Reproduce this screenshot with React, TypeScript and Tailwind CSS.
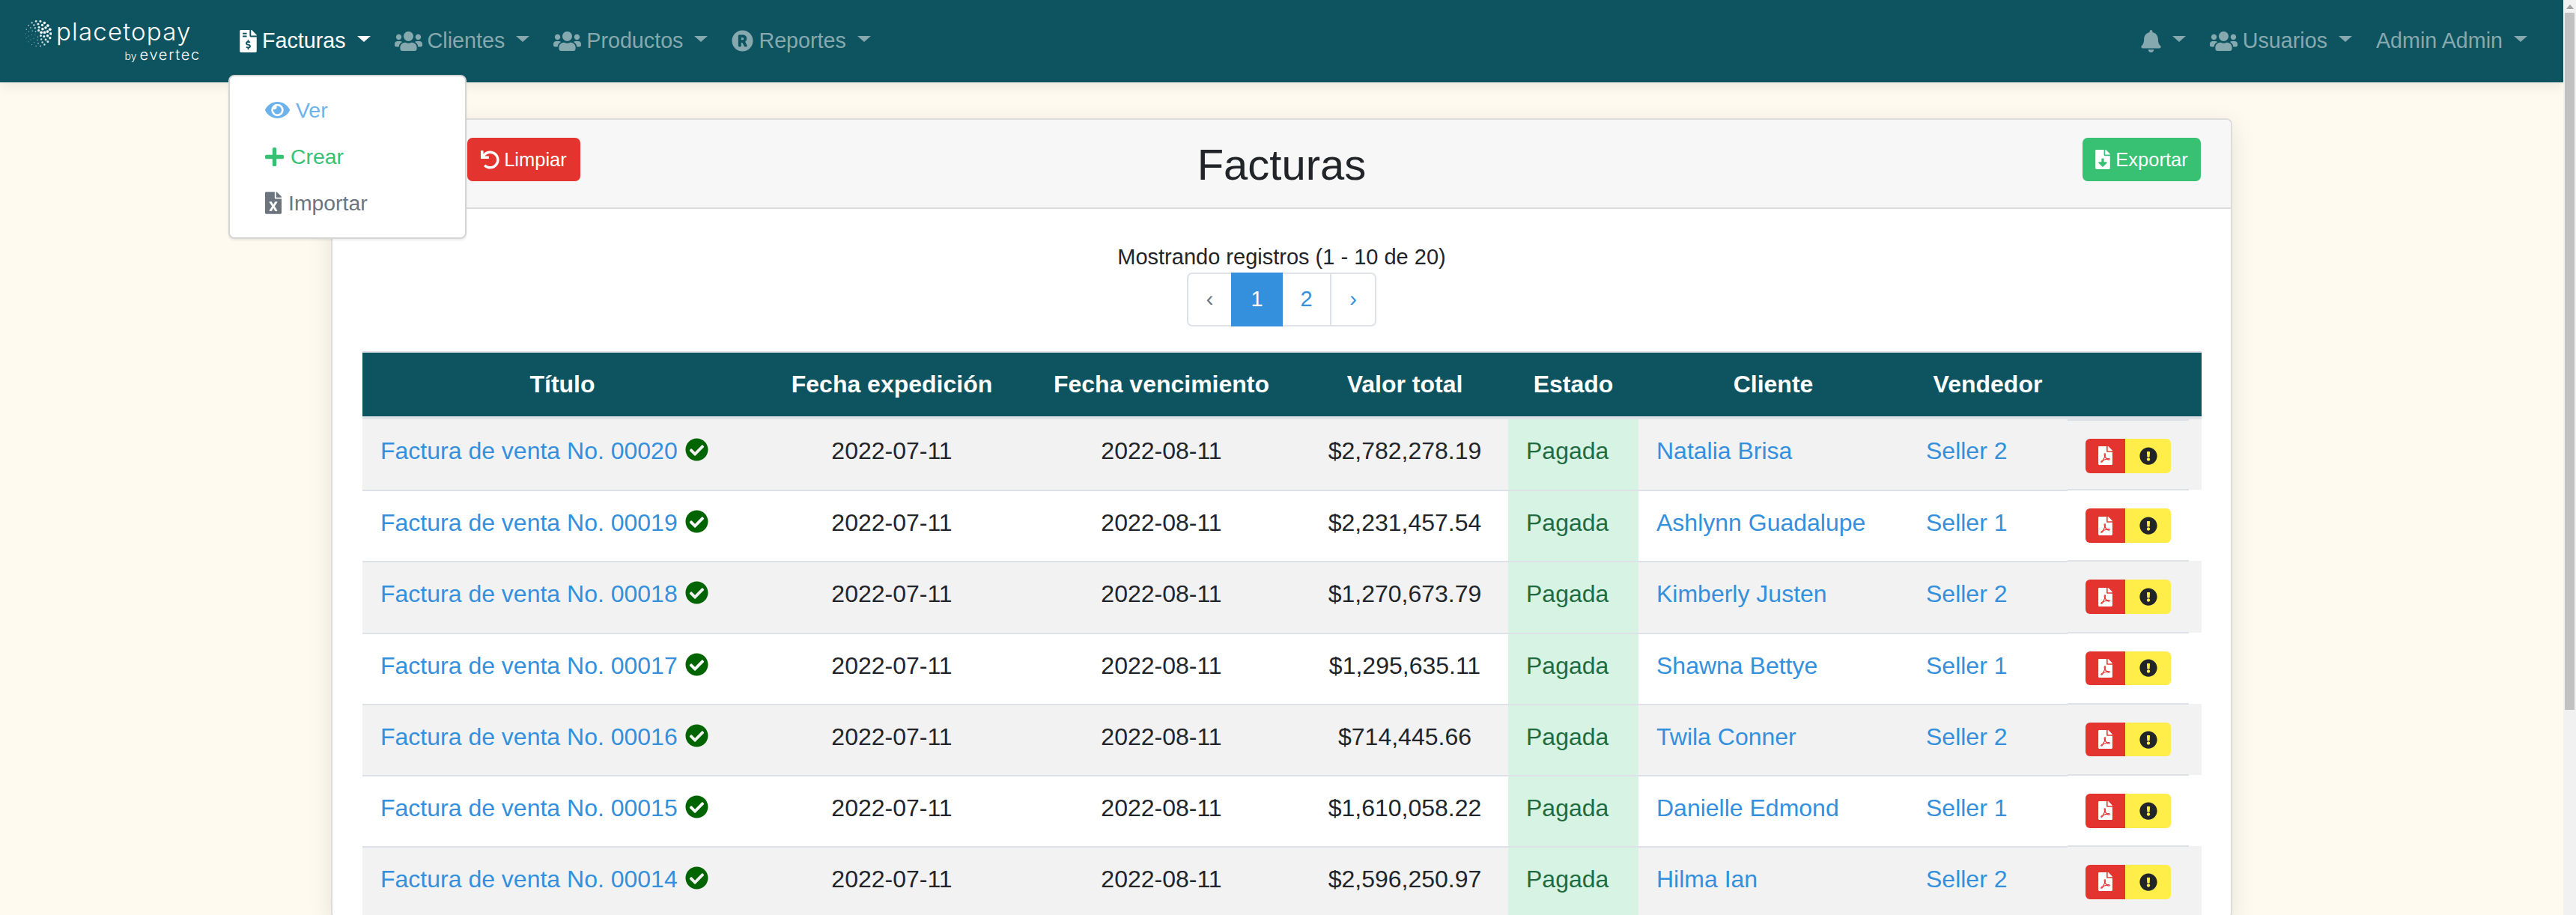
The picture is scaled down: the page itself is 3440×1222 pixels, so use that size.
import React from "react";
import {
  FaFileInvoiceDollar, FaUsers, FaRegistered, FaBell, FaEye, FaPlus, FaFileExcel,
  FaUndo, FaFileDownload, FaCheckCircle, FaFilePdf, FaExclamationCircle,
} from "react-icons/fa";

const rows = [
  ["00020", "$2,782,278.19", "Natalia Brisa", "Seller 2"],
  ["00019", "$2,231,457.54", "Ashlynn Guadalupe", "Seller 1"],
  ["00018", "$1,270,673.79", "Kimberly Justen", "Seller 2"],
  ["00017", "$1,295,635.11", "Shawna Bettye", "Seller 1"],
  ["00016", "$714,445.66", "Twila Conner", "Seller 2"],
  ["00015", "$1,610,058.22", "Danielle Edmond", "Seller 1"],
  ["00014", "$2,596,250.97", "Hilma Ian", "Seller 2"],
];

const heads = ["Título", "Fecha expedición", "Fecha vencimiento", "Valor total", "Estado", "Cliente", "Vendedor", ""];

function Caret() {
  return <span className="ml-[15px] mb-[5px] w-0 h-0 border-x-[9px] border-x-transparent border-t-[8px] border-t-current" />;
}

function NavItem({ icon, label, active }: { icon?: React.ReactNode; label?: string; active?: boolean }) {
  return (
    <div className={`flex items-center ${active ? "text-white" : "text-[#86a9af]"}`}>
      {icon}
      {label && <span className={icon ? "ml-[7px]" : ""}>{label}</span>}
      <Caret />
    </div>
  );
}

function LogoDots() {
  const dots: React.ReactNode[] = [];
  const rings: [number, number][] = [[16.8, 18], [12.8, 14], [8.6, 10], [4.4, 6]];
  rings.forEach(([r, n], ri) => {
    for (let i = 0; i < n; i++) {
      const a = (i / n) * Math.PI * 2 + ri * 0.22;
      const x = 18 + Math.cos(a) * r;
      const y = 18 + Math.sin(a) * r;
      const w = (1 + Math.cos(a + 0.45)) / 2;
      const size = 0.5 + 1.35 * w;
      dots.push(<circle key={`${ri}-${i}`} cx={x} cy={y} r={size} fill="#fff" opacity={0.55 + 0.45 * w} />);
    }
  });
  return (
    <svg width="36" height="36" viewBox="0 0 36 36" className="shrink-0">
      {dots}
    </svg>
  );
}

function Logo() {
  return (
    <div className="w-[235px] h-[56px] mr-[52px] text-white font-['Inter','Open_Sans',sans-serif] flex flex-col">
      <div className="flex h-[36px]">
        <LogoDots />
        <span className="ml-[6px] -mt-[3px] text-[33px] leading-[36px] font-light tracking-[1.2px]">placetopay</span>
      </div>
      <div className="flex justify-end items-baseline h-[20px] leading-[20px]">
        <span className="text-[14px] font-light">by</span>
        <span className="ml-[4px] text-[20px] font-light tracking-[1.7px]">evertec</span>
      </div>
    </div>
  );
}

export default function App() {
  return (
    <div className="flex h-screen overflow-hidden bg-[#fffaf0] text-[#212529] font-['Liberation_Sans','Arial',sans-serif]">
      <div className="flex-1 min-w-0 relative">
        <nav className="h-[110px] bg-[#0d5460] shadow-[0_4px_16px_rgba(0,0,0,0.08)] flex items-center justify-between pl-[33px] pr-[48px] text-[28.7px] relative">
          <div className="flex items-center">
            <Logo />
            <div className="flex items-center gap-[32px]">
              <NavItem active icon={<FaFileInvoiceDollar className="w-[23px] h-[30px] text-white" />} label="Facturas" />
              <NavItem icon={<FaUsers className="w-[37px] h-[30px]" />} label="Clientes" />
              <NavItem icon={<FaUsers className="w-[37px] h-[30px]" />} label="Productos" />
              <NavItem icon={<FaRegistered className="w-[29px] h-[29px]" />} label="Reportes" />
            </div>
          </div>
          <div className="flex items-center gap-[32px]">
            <NavItem icon={<FaBell className="w-[27px] h-[30px]" />} />
            <NavItem icon={<FaUsers className="w-[37px] h-[30px]" />} label="Usuarios" />
            <NavItem label="Admin Admin" />
          </div>
        </nav>

        <div className="absolute left-[305px] top-[100px] z-10 w-[318px] h-[219px] bg-white border-2 border-[#d5d5d5] rounded-[8px] pt-[15px] pl-[47px] text-[28.4px] flex flex-col shadow-[0_2px_3px_rgba(0,0,0,0.08)]">
          <div className="h-[62px] flex items-center text-[#6cb2eb] -mt-[1px]">
            <FaEye className="w-[33px] h-[30px]" />
            <span className="ml-[8px]">Ver</span>
          </div>
          <div className="h-[62px] flex items-center text-[#38c172]">
            <FaPlus className="w-[25px] h-[29px]" />
            <span className="ml-[9px]">Crear</span>
          </div>
          <div className="h-[62px] flex items-center text-[#6c757d]">
            <FaFileExcel className="w-[22px] h-[30px]" />
            <span className="ml-[9px]">Importar</span>
          </div>
        </div>

        <main className="w-[2539px] mx-auto mt-[48px] bg-white border-2 border-[#dcdcdc] rounded-[8px] shadow-[0_8px_32px_rgba(0,0,0,0.1)]">
          <div className="h-[119px] bg-[#f7f7f7] border-b-2 border-[#dcdcdc] rounded-t-[6px] px-[40px] pt-[24px] flex justify-between items-start relative">
            <div className="pl-[140px]">
              <button className="h-[58px] w-[151px] bg-[#e3342f] text-white rounded-[7px] text-[25.5px] flex items-center justify-center gap-[6px]">
                <FaUndo className="w-[25px] h-[25px]" />
                Limpiar
              </button>
            </div>
            <h1 className="absolute left-0 right-0 top-[25px] text-center text-[58px] leading-[70px] font-normal pointer-events-none">Facturas</h1>
            <button className="h-[58px] w-[158px] bg-[#38c172] text-white rounded-[7px] text-[25.5px] flex items-center justify-center gap-[7px]">
              <FaFileDownload className="w-[20px] h-[26px]" />
              Exportar
            </button>
          </div>

          <div className="px-[40px]">
            <p className="pt-[44px] text-center text-[29px] leading-[41px]">Mostrando registros (1 - 10 de 20)</p>
            <div className="flex justify-center text-[29px] mb-[33px]">
              <div className="flex h-[72px] items-stretch">
                <span className="w-[59px] flex items-center justify-center text-[#6c757d] border-2 border-r-0 border-[#dee2e6] rounded-l-[7px]">‹</span>
                <span className="w-[69px] flex items-center justify-center text-white bg-[#3490dc]">1</span>
                <span className="w-[65px] flex items-center justify-center text-[#3490dc] border-y-2 border-r-2 border-[#dee2e6]">2</span>
                <span className="w-[60px] flex items-center justify-center text-[#3490dc] border-y-2 border-r-2 border-[#dee2e6] rounded-r-[7px]">›</span>
              </div>
            </div>

            <table className="w-[2456px] table-fixed border-separate border-spacing-0 text-[32px]">
              <colgroup>
                <col className="w-[534px]" />
                <col className="w-[346px]" />
                <col className="w-[374px]" />
                <col className="w-[276px]" />
                <col className="w-[174px]" />
                <col className="w-[360px]" />
                <col className="w-[213px]" />
                <col className="w-[179px]" />
              </colgroup>
              <thead>
                <tr className="bg-[#0d5460] text-white">
                  {heads.map((h, i) => (
                    <th key={i} className="h-[91px] border-t-2 border-b-4 border-t-[#dee2e6] border-b-[#dee2e6] text-center font-bold align-middle text-[32px] pb-[2px]">
                      {h}
                    </th>
                  ))}
                </tr>
              </thead>
              <tbody>
                {rows.map((r, i) => {
                  const b = i === 0 ? "" : "border-t-2 border-[#dee2e6]";
                  const td = `${b} align-top pt-[18px] leading-[48px] px-[24px]`;
                  return (
                    <tr key={r[0]} className={`${i % 2 === 0 ? "bg-[#f2f2f2]" : "bg-white"} ${i === 0 ? "h-[94.3px]" : "h-[95.2px]"}`}>
                      <td className={`${td} whitespace-nowrap`}>
                        <a className="text-[#3490dc]">Factura de venta No. {r[0]}</a>
                        <FaCheckCircle className="inline-block ml-[10px] w-[31px] h-[31px] text-[#006400] align-[-3px]" />
                      </td>
                      <td className={`${td} text-center`}>2022-07-11</td>
                      <td className={`${td} text-center`}>2022-08-11</td>
                      <td className={`${td} text-center !px-0`}>{r[1]}</td>
                      <td className={`${td} bg-[#d7f3e3] text-[#1f6b41]`}>Pagada</td>
                      <td className={`${td} whitespace-nowrap`}><a className="text-[#3490dc]">{r[2]}</a></td>
                      <td className={td}><a className="text-[#3490dc]">{r[3]}</a></td>
                      <td className="align-top p-0">
                        <div className={`w-[162px] ${i === 0 ? "" : "-mt-[1px]"} border-t-2 border-[#dee2e6] pt-[24px] pl-[24px]`}>
                          <div className="flex h-[45.5px] w-[114px] rounded-[6px] overflow-hidden">
                            <span className="w-[53px] bg-[#e3342f] flex items-center justify-center">
                              <FaFilePdf className="w-[19px] h-[25px] text-white" />
                            </span>
                            <span className="w-[61px] bg-[#ffed4a] flex items-center justify-center">
                              <FaExclamationCircle className="w-[24px] h-[24px] text-[#212529]" />
                            </span>
                          </div>
                        </div>
                      </td>
                    </tr>
                  );
                })}
              </tbody>
            </table>
          </div>
        </main>
      </div>

      <div className="w-[17px] shrink-0 bg-[#f1f1f1] relative z-20">
        <div className="h-[17px] flex items-center justify-center">
          <span className="w-0 h-0 border-x-[5px] border-x-transparent border-b-[6px] border-b-[#a3a3a3]" />
        </div>
        <div className="mx-[2px] h-[931px] bg-[#c1c1c1]" />
      </div>
    </div>
  );
}
